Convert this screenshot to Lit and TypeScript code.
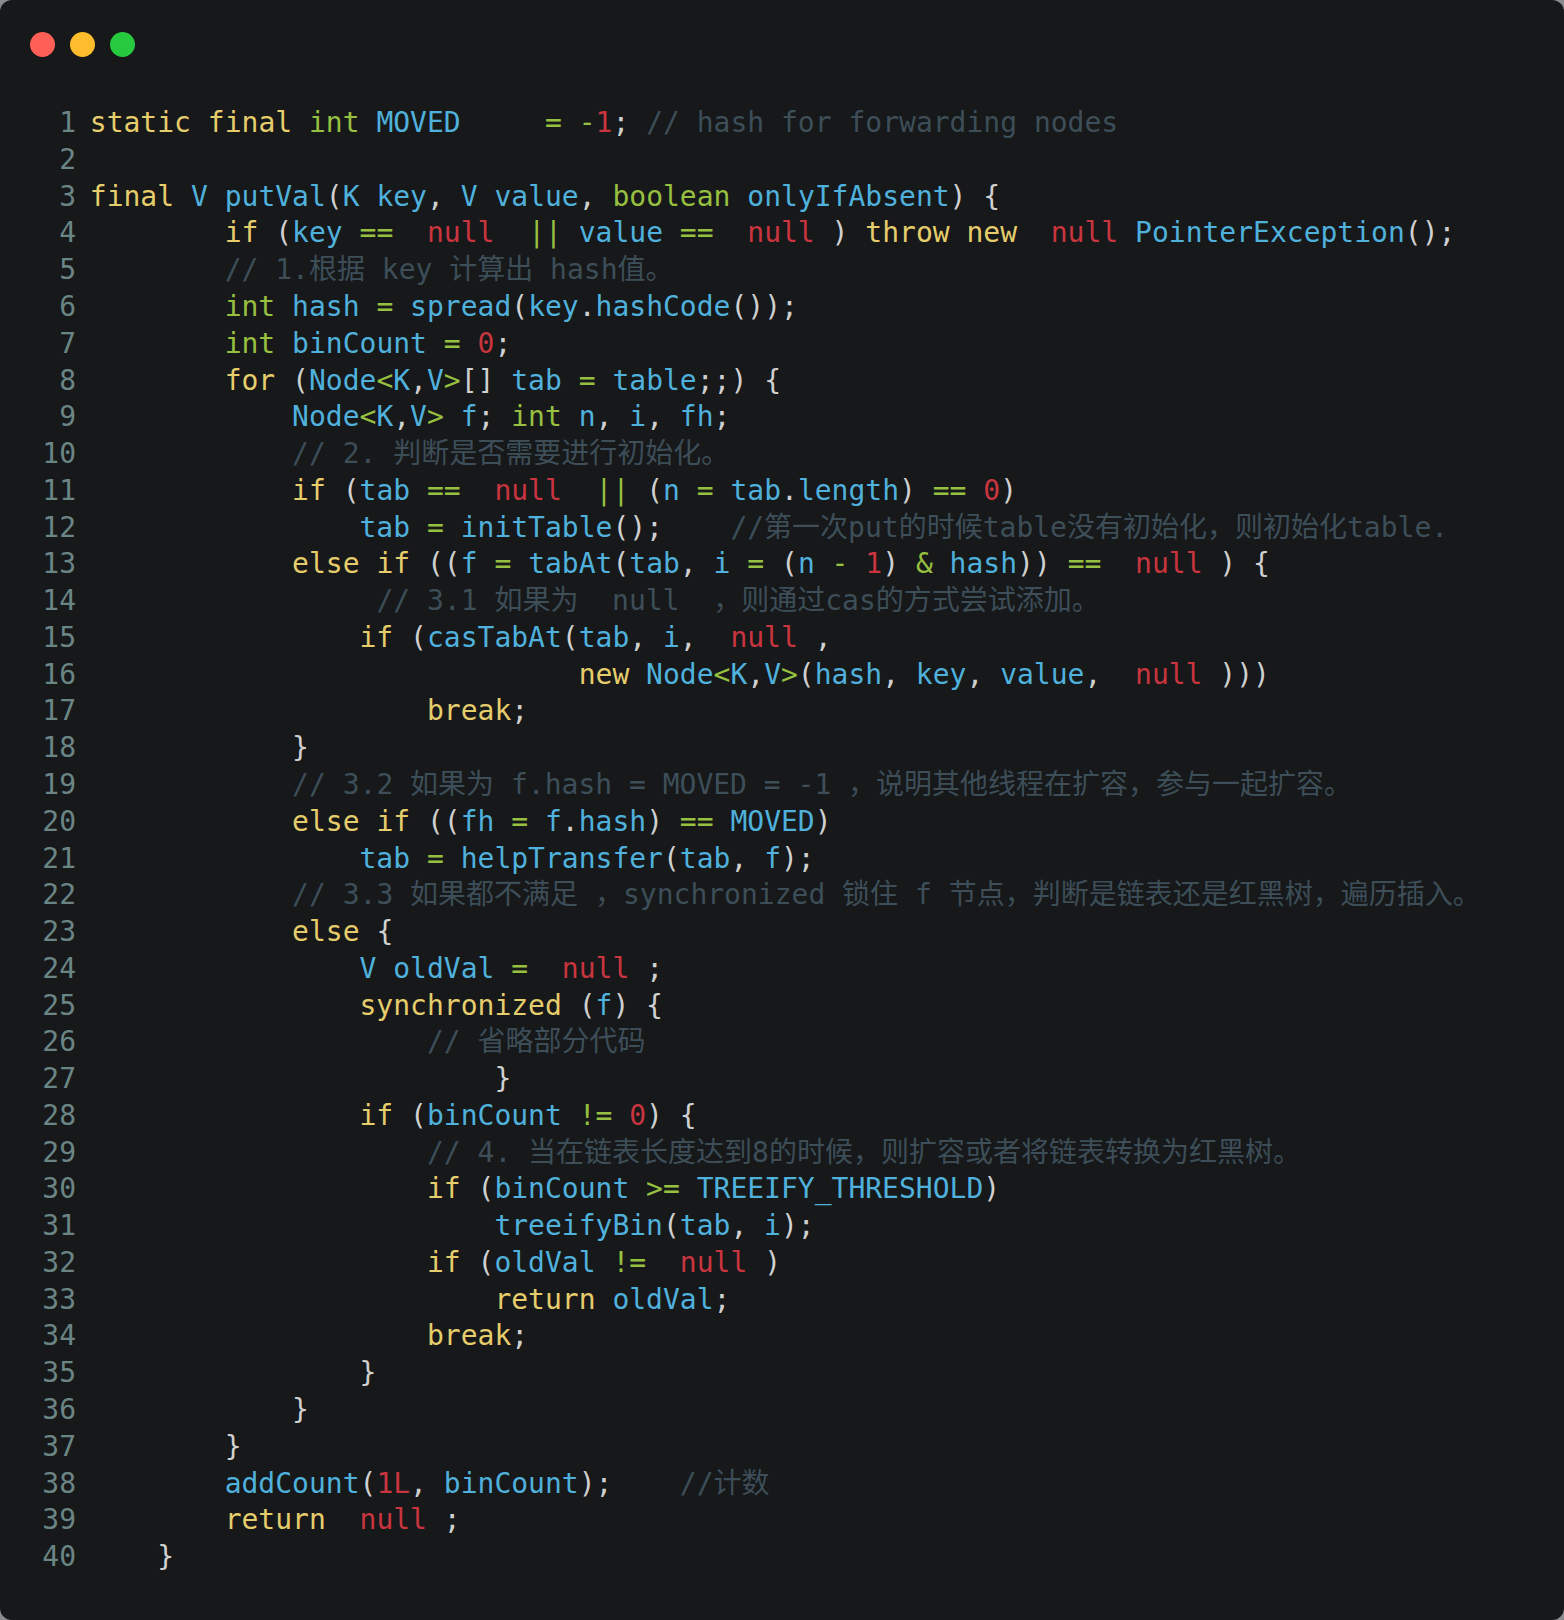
import { LitElement, html, css } from "lit";
import { customElement } from "lit/decorators.js";

const SOURCE: string[] = [
  "static final int MOVED     = -1; // hash for forwarding nodes",
  "",
  "final V putVal(K key, V value, boolean onlyIfAbsent) {",
  "        if (key ==  null  || value ==  null ) throw new  null PointerException();",
  "        // 1.根据 key 计算出 hash值。",
  "        int hash = spread(key.hashCode());",
  "        int binCount = 0;",
  "        for (Node<K,V>[] tab = table;;) {",
  "            Node<K,V> f; int n, i, fh;",
  "            // 2. 判断是否需要进行初始化。",
  "            if (tab ==  null  || (n = tab.length) == 0)",
  "                tab = initTable();    //第一次put的时候table没有初始化，则初始化table.",
  "            else if ((f = tabAt(tab, i = (n - 1) & hash)) ==  null ) {",
  "                 // 3.1 如果为  null  ，则通过cas的方式尝试添加。",
  "                if (casTabAt(tab, i,  null ,",
  "                             new Node<K,V>(hash, key, value,  null )))",
  "                    break;",
  "            }",
  "            // 3.2 如果为 f.hash = MOVED = -1 ，说明其他线程在扩容，参与一起扩容。",
  "            else if ((fh = f.hash) == MOVED)",
  "                tab = helpTransfer(tab, f);",
  "            // 3.3 如果都不满足 ，synchronized 锁住 f 节点，判断是链表还是红黑树，遍历插入。",
  "            else {",
  "                V oldVal =  null ;",
  "                synchronized (f) {",
  "                    // 省略部分代码",
  "                        }",
  "                if (binCount != 0) {",
  "                    // 4. 当在链表长度达到8的时候，则扩容或者将链表转换为红黑树。",
  "                    if (binCount >= TREEIFY_THRESHOLD)",
  "                        treeifyBin(tab, i);",
  "                    if (oldVal !=  null )",
  "                        return oldVal;",
  "                    break;",
  "                }",
  "            }",
  "        }",
  "        addCount(1L, binCount);    //计数",
  "        return  null ;",
  "    }",
];

const KEYWORDS = new Set(["static", "final", "if", "throw", "new", "for", "else", "break", "synchronized", "return"]);
const TYPES = new Set(["int", "boolean"]);
const TOKEN = /(\/\/.*$)|(\s+)|([A-Za-z_][A-Za-z_0-9]*)|(\d+L?)|(==|!=|>=|\|\||[=<>&-])|(.)/g;

function highlight(line: string) {
  const parts: unknown[] = [];
  for (const m of line.matchAll(TOKEN)) {
    const [text, comment, space, word, num, op] = m;
    let cls = "p";
    if (comment) cls = "c";
    else if (space) { parts.push(text); continue; }
    else if (word) cls = KEYWORDS.has(word) ? "k" : TYPES.has(word) ? "t" : word === "null" ? "n" : "v";
    else if (num) cls = "n";
    else if (op) cls = "t";
    parts.push(html`<span class=${cls}>${text}</span>`);
  }
  return parts;
}

@customElement("app-root")
export class AppRoot extends LitElement {
  static styles = css`
    :host {
      display: block;
      width: 1564px;
      height: 1620px;
      background: #8a8b8c;
    }
    .window {
      box-sizing: border-box;
      height: 100%;
      background: #16181a;
      border-radius: 12px;
      padding: 32px 0 0 30px;
      font-family: "DejaVu Sans Mono", "Noto Sans CJK SC", monospace;
      font-size: 28px;
    }
    .dots {
      display: flex;
      gap: 15px;
      margin-bottom: 48.2px;
    }
    .dot {
      width: 25px;
      height: 25px;
      border-radius: 50%;
    }
    .red { background: #ff5f56; }
    .yellow { background: #ffbd2e; }
    .green { background: #27c93f; }
    .code {
      margin: 0;
      padding: 0;
      list-style: none;
    }
    .row {
      display: flex;
      gap: 13.8px;
      height: 36.77px;
      line-height: 36.77px;
    }
    .num {
      flex: none;
      width: 46px;
      text-align: right;
      color: #6b8585;
    }
    .src {
      font: inherit;
      white-space: pre;
    }
    .k { color: #e6cd6c; }
    .t { color: #98c040; }
    .v { color: #4fb1dc; }
    .n { color: #c9353f; }
    .p { color: #d0d0d0; }
    .c { color: #3d4e58; }
  `;

  render() {
    return html`
      <div class="window">
        <div class="dots">
          <span class="dot red"></span>
          <span class="dot yellow"></span>
          <span class="dot green"></span>
        </div>
        <ol class="code">
          ${SOURCE.map(
            (line, i) => html`<li class="row"><span class="num">${i + 1}</span><code class="src">${highlight(line)}</code></li>`
          )}
        </ol>
      </div>
    `;
  }
}
